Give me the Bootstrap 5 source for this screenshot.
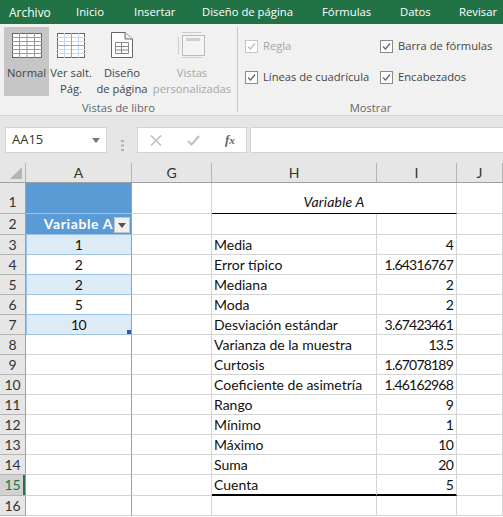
<!DOCTYPE html>
<html lang="es">
<head>
<meta charset="utf-8">
<title>Excel</title>
<link href="https://cdn.jsdelivr.net/npm/bootstrap@5.3.3/dist/css/bootstrap.min.css" rel="stylesheet">
<script src="https://cdn.jsdelivr.net/npm/bootstrap@5.3.3/dist/js/bootstrap.bundle.min.js"></script>
<style>
html, body { margin: 0; height: 517px; overflow: hidden; background: #fff; }
body { font-family: "Open Sans", "Noto Sans", sans-serif; font-size: 11.2px; color: #444; }
.tabbar { height: 24px; background: #217346; color: #fff; font-size: 11.3px; white-space: nowrap; padding-left: 9px; }
.tabbar span:nth-child(1) { width: 67px; padding-top: 1px; font-size: 12px; }
.tabbar span:nth-child(2) { width: 58px; }
.tabbar span:nth-child(3) { width: 68px; }
.tabbar span:nth-child(4) { width: 120px; }
.tabbar span:nth-child(5) { width: 78px; }
.tabbar span:nth-child(6) { width: 59px; }
.ribbon { height: 92px; background: #f1f1f1; border-bottom: 1px solid #d2d2d2; }
.views { width: 238px; height: 85px; margin-top: 3px; padding-left: 4px; border-right: 1px solid #c6c6c6; position: relative; }
.rbtn { height: 69px; padding-top: 6px; line-height: 16px; text-align: center; white-space: nowrap; }
.rbtn svg { display: block; margin: 0 auto 7px; }
.rbtn-tall { padding-top: 5px; }
.btn-normal { width: 45px; }
.btn-salt { width: 44px; }
.btn-page { width: 58px; }
.btn-custom { width: 82px; }
.rbtn-on { background: #c6c6c6; }
.rbtn-off { color: #a6a6a6; }
.grouplabel { position: absolute; left: 0; right: 0; bottom: -4px; text-align: center; color: #666; line-height: 16px; }
.showgroup { flex: 1; height: 85px; margin-top: 3px; position: relative; padding: 4px 0 0 7px; }
.chkrow { height: 31px; white-space: nowrap; }
.chkcol { width: 135px; }
.chkbox { width: 13px; height: 13px; border: 1px solid #8a8a8a; background: #fff; margin-right: 5px; flex: none; }
.chkbox svg { display: block; }
.chkdim { color: #a6a6a6; }
.chkdim .chkbox { border-color: #c6c6c6; }
.fbar { height: 47px; background: #e6e6e6; padding: 11px 0 0 5px; }
.fbox { height: 26px; background: #fff; border: 1px solid #d4d4d4; }
.namebox { width: 102px; padding: 0 6px; font-size: 13px; color: #333; }
.caret { width: 0; height: 0; border: 4px solid transparent; border-top: 5px solid #777; border-bottom: 0; }
.gripper { width: 30px; color: #a0a0a0; }
.fbtns { width: 110px; margin-right: 3px; padding: 0 11px 0 12px; }
.finput { flex: 1; border-right: 0; }
.fx { font-family: "Liberation Serif", serif; font-style: italic; font-weight: 700; color: #666; font-size: 13px; }
.sheet { table-layout: fixed; border-collapse: separate; border-spacing: 0; width: 503px; font-family: Lato, "Liberation Sans", sans-serif; font-size: 14px; color: #111; background: #fff; }
.sheet td, .sheet th { border-right: 1px solid #d4d4d4; border-bottom: 1px solid #d4d4d4; padding: 0 2px; line-height: 18px; white-space: nowrap; overflow: hidden; font-weight: 400; position: relative; }
.sheet thead th { height: 20px; background: #e6e6e6; color: #333; text-align: center; border-right-color: #b4b4b4; border-bottom-color: #9f9f9f; }
.sheet .rowhead { background: #e6e6e6; color: #333; text-align: center; border-right-color: #9f9f9f; border-bottom-color: #b4b4b4; padding: 0; }
.sheet .rowtall { vertical-align: bottom; padding-bottom: 2px; }
.sheet .cola { border-right-color: #9f9f9f; }
.sheet .rowsel { background: #d2d2d2; color: #217346; box-shadow: inset -2px 0 0 #217346; }
.sheet .hd { background: #5b9bd5; border-bottom-color: #9dc3e6; border-right-color: #9f9f9f; }
.sheet .hdtxt { color: #fff; font-weight: 700; text-align: right; padding-right: 18px; letter-spacing: .6px; }
.sheet .band { background: #ddebf7; }
.sheet .pale { border-bottom-color: #9dc3e6; box-shadow: inset 1px 0 0 #9dc3e6; letter-spacing: -.7px; }
.sheet .num { text-align: right; letter-spacing: -.8px; padding-right: 3px; }
.sheet .title { font-style: italic; text-align: center; vertical-align: bottom; padding-bottom: 2px; letter-spacing: .2px; }
.sheet .uline { border-bottom: 1px solid #000; }
.sheet .thick { border-bottom: 2px solid #000; }
.filterbtn { position: absolute; right: 1px; bottom: 1px; width: 16px; height: 16px; background: #f0f0f0; border: 1px solid #c4c4c4; display: flex; align-items: center; justify-content: center; }
.fillmark { position: absolute; right: 0; bottom: 0; width: 4px; height: 4px; background: #3f51b5; }
.corner { width: 0; height: 0; border-left: 12px solid transparent; border-bottom: 12px solid #b4b4b4; position: absolute; right: 3px; bottom: 3px; }
</style>
</head>
<body>

<div class="tabbar d-flex align-items-center">
	<span>Archivo</span><span>Inicio</span><span>Insertar</span><span>Diseño de página</span><span>Fórmulas</span><span>Datos</span><span>Revisar</span>
</div>

<div class="ribbon d-flex">
	<div class="views d-flex">
		<div class="rbtn rbtn-on btn-normal">
			<svg width="30" height="25" viewBox="0 0 30 25"><rect x=".5" y=".5" width="29" height="24" fill="#fff" stroke="#666"/><path d="M0 4.500H30M0 8.500H30M0 12.500H30M0 16.500H30M0 20.500H30M7.500 0V25M15 0V25M22.500 0V25" stroke="#999" fill="none"/></svg>
			Normal
		</div>
		<div class="rbtn btn-salt">
			<svg width="28" height="25" viewBox="0 0 28 25"><rect x=".5" y=".5" width="27" height="24" fill="#fff" stroke="#666"/><path d="M0 4.500H28M0 8.500H28M0 16.500H28M0 20.500H28M7.500 0V25M21.500 0V25" stroke="#c4d8ee" fill="none"/><path d="M0 12.500H28M14.500 0V25" stroke="#7fa8d6" fill="none"/></svg>
			Ver salt.<br>Pág.
		</div>
		<div class="rbtn rbtn-tall btn-page">
			<svg width="22" height="26" viewBox="0 0 22 26"><path d="M.5.500H14L21.500 7V25.500H.5Z" fill="#fff" stroke="#666"/><path d="M14 .5V7H21.500" fill="#eee" stroke="#666"/><path d="M4.500 10.500H17.500V21.500H4.500ZM4.500 14.500H17.500M4.500 18H17.500M10.500 10.500V21.500" fill="none" stroke="#888"/></svg>
			Diseño<br>de página
		</div>
		<div class="rbtn rbtn-tall rbtn-off btn-custom">
			<svg width="28" height="26" viewBox="0 0 28 26"><rect x="4.500" y="3.500" width="22" height="20" fill="#f6f3f6" stroke="#bbb"/><rect x="8" y="6" width="14" height="3" fill="#cfcfcf"/><path d="M.5 5V22M4 .5H24M4 25.500H24" stroke="#ccc" fill="none"/></svg>
			Vistas<br>personalizadas
		</div>
		<div class="grouplabel">Vistas de libro</div>
	</div>
	<div class="showgroup d-flex">
		<div class="chkcol">
			<div class="chkrow d-flex align-items-center chkdim"><span class="chkbox"><svg width="11" height="11" viewBox="0 0 11 11"><path d="M2 5.500 4.500 8 9 2.500" fill="none" stroke="#bbb" stroke-width="1.300"/></svg></span>Regla</div>
			<div class="chkrow d-flex align-items-center"><span class="chkbox"><svg width="11" height="11" viewBox="0 0 11 11"><path d="M2 5.500 4.500 8 9 2.500" fill="none" stroke="#666" stroke-width="1.300"/></svg></span>Líneas de cuadrícula</div>
		</div>
		<div>
			<div class="chkrow d-flex align-items-center"><span class="chkbox"><svg width="11" height="11" viewBox="0 0 11 11"><path d="M2 5.500 4.500 8 9 2.500" fill="none" stroke="#666" stroke-width="1.300"/></svg></span>Barra de fórmulas</div>
			<div class="chkrow d-flex align-items-center"><span class="chkbox"><svg width="11" height="11" viewBox="0 0 11 11"><path d="M2 5.500 4.500 8 9 2.500" fill="none" stroke="#666" stroke-width="1.300"/></svg></span>Encabezados</div>
		</div>
		<div class="grouplabel">Mostrar</div>
	</div>
</div>

<div class="fbar d-flex">
	<div class="fbox namebox d-flex align-items-center justify-content-between"><span>AA15</span><span class="caret"></span></div>
	<div class="gripper d-flex align-items-center justify-content-center"><svg width="3" height="11" viewBox="0 0 3 11"><path d="M0 0H3V2H0ZM0 4.500H3V6.500H0ZM0 9H3V11H0Z" fill="#b0b0b0"/></svg></div>
	<div class="fbox fbtns d-flex align-items-center justify-content-between">
		<svg width="12" height="11" viewBox="0 0 12 11"><path d="M1 .5 11 10.500M11 .5 1 10.500" stroke="#c0c0c0" stroke-width="1.600"/></svg>
		<svg width="13" height="11" viewBox="0 0 13 11"><path d="M1 6 4.500 9.500 12 1" fill="none" stroke="#c0c0c0" stroke-width="2"/></svg>
		<span class="fx">f<small>x</small></span>
	</div>
	<div class="fbox finput"></div>
</div>

<table class="sheet" id="sheet">
	<colgroup><col style="width:26px"><col style="width:106px"><col style="width:80px"><col style="width:165px"><col style="width:80px"><col></colgroup>
	<thead>
		<tr><th class="p-0"><span class="corner"></span></th><th>A</th><th>G</th><th>H</th><th>I</th><th>J</th></tr>
	</thead>
	<tbody id="rows"></tbody>
</table>

<script>
// hoja: etiqueta y valor de cada fila de la tabla de estadisticos
var stats = [
	["Media", "4"], ["Error típico", "1.64316767"], ["Mediana", "2"], ["Moda", "2"],
	["Desviación estándar", "3.67423461"], ["Varianza de la muestra", "13.5"],
	["Curtosis", "1.67078189"], ["Coeficiente de asimetría", "1.46162968"], ["Rango", "9"],
	["Mínimo", "1"], ["Máximo", "10"], ["Suma", "20"], ["Cuenta", "5"]
];
var colA = ["1", "2", "2", "5", "10"];
var html = "";
html += '<tr style="height:31px"><td class="rowhead rowtall">1</td><td class="hd"></td><td></td><td class="title uline" colspan="2">Variable A</td><td></td></tr>';
html += '<tr style="height:21px"><td class="rowhead">2</td><td class="hd hdtxt">Variable A<span class="filterbtn"><svg width="8" height="5" viewBox="0 0 8 5"><path d="M0 0H8L4 5Z" fill="#555"/></svg></span></td><td></td><td></td><td></td><td></td></tr>';
for (var i = 0; i < stats.length; i++) {
	var n = i + 3;
	var a = colA[i];
	var isLast = i === stats.length - 1;
	var aClass = "cola text-center" + (a && i % 2 === 0 ? " band" : "") + (a ? " pale" : "");
	var mark = i === 4 ? '<span class="fillmark"></span>' : "";
	var line = isLast ? ' class="thick"' : "";
	html += '<tr style="height:' + (isLast ? 21 : 20) + 'px"><td class="rowhead' + (isLast ? " rowsel" : "") + '">' + n + '</td>' +
		'<td class="' + aClass + '">' + (a || "") + mark + '</td><td></td>' +
		'<td' + line + '>' + stats[i][0] + '</td><td class="num' + (isLast ? " thick" : "") + '">' + stats[i][1] + '</td><td></td></tr>';
}
html += '<tr style="height:20px"><td class="rowhead">16</td><td class="cola"></td><td></td><td></td><td></td><td></td></tr>';
document.getElementById("rows").innerHTML = html;
</script>
</body>
</html>
